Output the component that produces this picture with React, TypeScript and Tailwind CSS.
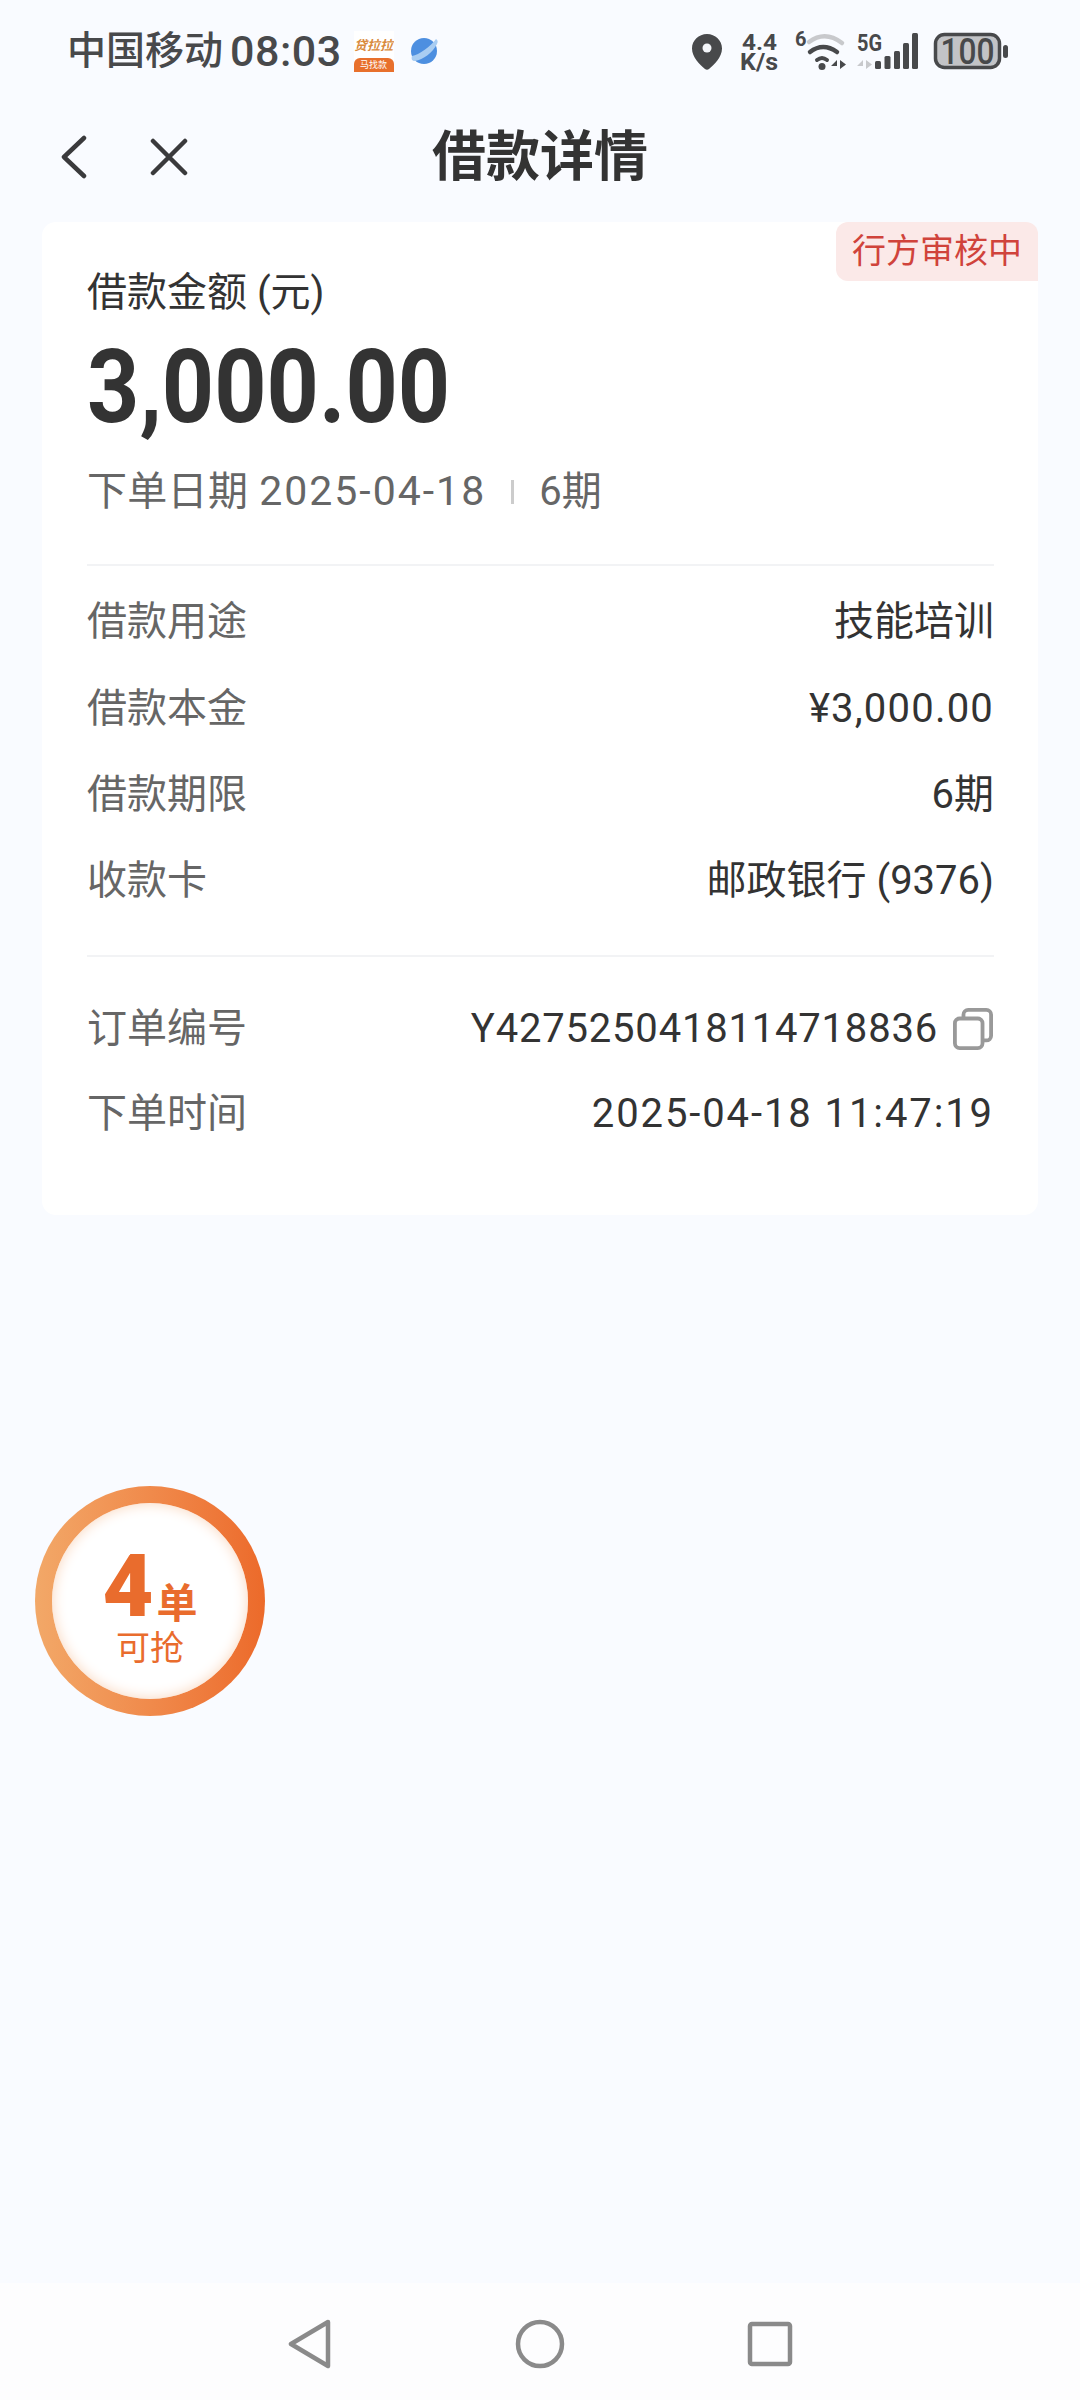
const font = "font-['Roboto','Noto_Sans_CJK_SC',sans-serif]"

function Row({ label, value, valueClass = '' }: { label: string; value: string; valueClass?: string }) {
  return (
    <div className="flex h-[86.4px] items-center justify-between">
      <span className="text-[#666666]">{label}</span>
      <span className={`text-[#333333] ${valueClass}`}>{value}</span>
    </div>
  )
}

function StatusIcons() {
  return (
    <svg width="330" height="50" viewBox="0 0 330 50" className="block">
      {/* location pin */}
      <path d="M15 8c-8.300 0-15 6.500-15 14.500C0 31 8 39 13 43c1.200 1 2.800 1 4 0 5-4 13-12 13-20.500C30 14.500 23.300 8 15 8z" fill="#48494b" />
      <circle cx="15" cy="22" r="4.500" fill="#f4f6fa" />
      {/* speed */}
      <text x="50" y="24" fontSize="22" fontWeight="700" fill="#48494b" fontFamily="Roboto" textLength="35" lengthAdjust="spacingAndGlyphs">4.4</text>
      <text x="48" y="44" fontSize="23" fontWeight="700" fill="#48494b" fontFamily="Roboto" textLength="38" lengthAdjust="spacingAndGlyphs">K/s</text>
      {/* wifi */}
      <text x="103" y="20" fontSize="20" fontWeight="700" fill="#48494b" fontFamily="Roboto">6</text>
      <path d="M117 16Q133 4 150 17" fill="none" stroke="#c8c9cc" strokeWidth="4.500" strokeLinecap="round" />
      <path d="M118 26Q131 16 145 26" fill="none" stroke="#48494b" strokeWidth="4.500" strokeLinecap="round" />
      <path d="M125 34Q130 30 135 34" fill="none" stroke="#48494b" strokeWidth="4" strokeLinecap="round" />
      <circle cx="130" cy="40.500" r="3.500" fill="#48494b" />
      <path d="M145 43v-9l-6 6h6zM148 34v9l6-4.500z" fill="#48494b" />
      {/* 5G and signal */}
      <text x="165" y="25" fontSize="23" fontWeight="700" fill="#48494b" fontFamily="Roboto" textLength="25" lengthAdjust="spacingAndGlyphs">5G</text>
      <path d="M171 43v-9l-6 6h6zM174 34v9l6-4.500z" fill="#c8c9cc" />
      <rect x="183" y="35" width="6" height="8" rx="1.500" fill="#48494b" />
      <rect x="192.500" y="30" width="6" height="13" rx="1.500" fill="#48494b" />
      <rect x="202" y="25" width="6" height="18" rx="1.500" fill="#48494b" />
      <rect x="211" y="17" width="6" height="26" rx="1.500" fill="#48494b" />
      <rect x="220" y="7" width="6" height="36" rx="1.500" fill="#48494b" />
      {/* battery */}
      <rect x="243.500" y="8.500" width="64" height="33" rx="9" fill="#c2c3c6" stroke="#48494b" strokeWidth="3.500" />
      <text x="275.500" y="38" fontSize="36" fontWeight="500" textAnchor="middle" fill="#48494b" fontFamily="Roboto" textLength="54" lengthAdjust="spacingAndGlyphs">100</text>
      <rect x="311" y="19" width="5" height="13" rx="2.500" fill="#48494b" />
    </svg>
  )
}

export default function App() {
  return (
    <div className={`relative flex h-[2400px] w-[1080px] flex-col overflow-hidden bg-[#f9fbff] ${font}`}>
      {/* status bar */}
      <div className="flex h-[102px] items-center justify-between pl-[67px] pr-[58px] text-[#48494b]">
        <div className="flex items-center">
          <span className="text-[39px] font-medium leading-none">中国移动</span>
          <span className="ml-[7px] text-[43px] font-medium leading-none tracking-[0.5px]">08:03</span>
          <div className="ml-[12px] flex h-[41px] w-[40px] flex-col overflow-hidden bg-white">
            <span className="mt-[8px] h-[14px] whitespace-nowrap text-center text-[13px] font-bold italic leading-[14px] text-[#d98a3c]">贷拉拉</span>
            <span className="mt-[5px] flex-1 rounded-t-[6px] bg-[#e8702c] text-center text-[9px] leading-[14px] text-white">马找款</span>
          </div>
          <svg width="30" height="30" viewBox="0 0 30 30" className="ml-[15px]">
            <circle cx="15" cy="15" r="13" fill="#4d8fe0" />
            <path d="M3 20C10 19 22 10 27 3c2 1 2 3 1 5-4 8-14 16-22 17-3 0-4-2-3-5z" fill="#a9cdf2" />
          </svg>
        </div>
        <StatusIcons />
      </div>

      {/* nav */}
      <div className="relative flex h-[120px] items-center justify-center pb-[8px]">
        <span className="text-[54px] font-bold leading-none text-[#333333]">借款详情</span>
        <div className="absolute left-[61px] top-[33px] flex items-center gap-[63px]">
          <svg width="26" height="44" viewBox="0 0 26 44" fill="none" stroke="#3a3a3c" strokeWidth="4.500" strokeLinecap="round" strokeLinejoin="round">
            <path d="M23 3L3 22l20 19" />
          </svg>
          <svg width="38" height="38" viewBox="0 0 38 38" fill="none" stroke="#3a3a3c" strokeWidth="4.500" strokeLinecap="round">
            <path d="M3 3l32 32M35 3L3 35" />
          </svg>
        </div>
      </div>

      {/* card */}
      <div className="relative mx-[42px] h-[993px] rounded-[14px] bg-white pl-[45px] pr-[44px] pt-[50px] text-[40px]">
        <div className="absolute right-0 top-0 flex h-[59px] w-[202px] items-center justify-center rounded-bl-[12px] rounded-tr-[12px] rounded-tl-[12px] bg-[#fbe9e8] text-[34px] text-[#d0433b]">
          行方审核中
        </div>
        <div className="text-[40px] leading-[42px] text-[#333333]">借款金额 (元)</div>
        <div className="mt-[12px] h-[122px] origin-left scale-x-[0.895] text-[102px] font-bold leading-[122px] text-[#333333]">3,000.00</div>
        <div className="mt-[19px] flex h-[50px] items-center text-[#666666]">
          <span className="tracking-[0.3px]">下单日期</span>
          <span className="ml-[11px] text-[41px] tracking-[2px]">2025-04-18</span>
          <span className="mx-[25px] h-[24px] w-[3px] bg-[#cccccc]" />
          <span>6期</span>
        </div>
        <div className="mt-[47px] border-t-2 border-[#f2f3f5]" />
        <div className="mt-[13px]">
          <Row label="借款用途" value="技能培训" />
          <Row label="借款本金" value="¥3,000.00" valueClass="tracking-[1.2px]" />
          <Row label="借款期限" value="6期" />
          <Row label="收款卡" value="邮政银行 (9376)" />
        </div>
        <div className="mt-[30px] border-t-2 border-[#f2f3f5]" />
        <div className="mt-[30px]">
          <div className="flex h-[84px] items-center justify-between">
            <span className="text-[#666666]">订单编号</span>
            <div className="flex items-center">
              <span className="tracking-[0.8px] text-[#333333]">Y4275250418114718836</span>
              <svg width="40" height="42" viewBox="0 0 42 44" fill="none" stroke="#999999" strokeWidth="4" className="ml-[15px] mr-[1px]">
                <rect x="2" y="11" width="29" height="31" rx="5" />
                <path d="M11 11V7a5 5 0 0 1 5-5h19a5 5 0 0 1 5 5v22a5 5 0 0 1-5 5h-4" />
              </svg>
            </div>
          </div>
          <Row label="下单时间" value="2025-04-18 11:47:19" valueClass="tracking-[1.9px]" />
        </div>
      </div>

      {/* floating grab-order bubble */}
      <div className="absolute left-[35px] top-[1486px] flex h-[230px] w-[230px] items-center justify-center rounded-full bg-gradient-to-r from-[#f2a868] to-[#ec6a2a]">
        <div className="flex h-[196px] w-[196px] flex-col items-center rounded-full bg-white pt-[45px] text-[#e96c2d] shadow-[inset_0_0_14px_#f9d5bb]">
          <div className="flex h-[76px] items-end leading-none">
            <span className="text-[88px] font-black leading-[76px]">4</span>
            <span className="mb-[-1px] ml-[3px] text-[41px] font-bold leading-[42px]">单</span>
          </div>
          <span className="mt-[6px] text-[34px] leading-[36px]">可抢</span>
        </div>
      </div>

      {/* system nav */}
      <div className="mt-auto flex h-[117px] items-start bg-[#fdfdfe] pt-[36px]">
        <svg width="44" height="50" viewBox="0 0 44 50" fill="none" stroke="#8a8a8a" strokeWidth="4.500" strokeLinejoin="round" className="ml-[288px]">
          <path d="M40 3L3 25l37 22z" />
        </svg>
        <svg width="50" height="50" viewBox="0 0 50 50" fill="none" stroke="#8a8a8a" strokeWidth="4.500" className="ml-[183px]">
          <circle cx="25" cy="25" r="22" />
        </svg>
        <svg width="46" height="46" viewBox="0 0 46 46" fill="none" stroke="#8a8a8a" strokeWidth="4.500" strokeLinejoin="round" className="ml-[182px] mt-[2px]">
          <rect x="3" y="3" width="40" height="40" rx="2" />
        </svg>
      </div>
    </div>
  )
}
